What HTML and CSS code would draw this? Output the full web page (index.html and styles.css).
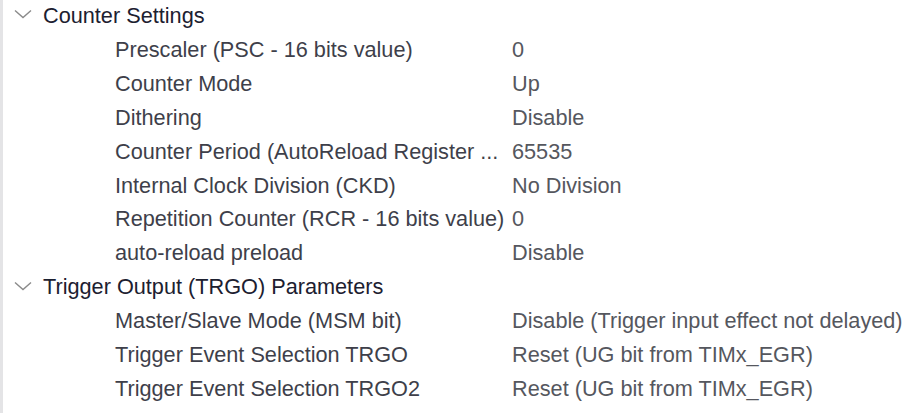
FILE: index.html
```html
<!DOCTYPE html>
<html>
<head>
    <title>TIM Parameter Settings</title>
    <link rel="stylesheet" href="styles.css">
</head>
<body>
    <div class="tree">
        <div class="group">
            <div class="group-head">
                <svg class="chevron" width="18" height="10" viewBox="0 0 18 10"><path d="M1 1.5 L9 8.5 L17 1.5" fill="none" stroke="#8a8a8a" stroke-width="1.4"/></svg>
                <span>Counter Settings</span>
            </div>
            <div class="param"><span class="name">Prescaler (PSC - 16 bits value)</span><span class="value">0</span></div>
            <div class="param"><span class="name">Counter Mode</span><span class="value">Up</span></div>
            <div class="param"><span class="name">Dithering</span><span class="value">Disable</span></div>
            <div class="param"><span class="name">Counter Period (AutoReload Register ...</span><span class="value">65535</span></div>
            <div class="param"><span class="name">Internal Clock Division (CKD)</span><span class="value">No Division</span></div>
            <div class="param"><span class="name">Repetition Counter (RCR - 16 bits value)</span><span class="value">0</span></div>
            <div class="param"><span class="name">auto-reload preload</span><span class="value">Disable</span></div>
        </div>
        <div class="group">
            <div class="group-head">
                <svg class="chevron" width="18" height="10" viewBox="0 0 18 10"><path d="M1 1.5 L9 8.5 L17 1.5" fill="none" stroke="#8a8a8a" stroke-width="1.4"/></svg>
                <span>Trigger Output (TRGO) Parameters</span>
            </div>
            <div class="param"><span class="name">Master/Slave Mode (MSM bit)</span><span class="value">Disable (Trigger input effect not delayed)</span></div>
            <div class="param"><span class="name">Trigger Event Selection TRGO</span><span class="value">Reset (UG bit from TIMx_EGR)</span></div>
            <div class="param"><span class="name">Trigger Event Selection TRGO2</span><span class="value">Reset (UG bit from TIMx_EGR)</span></div>
        </div>
    </div>
</body>
</html>
```

FILE: styles.css
```css
html, body {
    margin: 0;
    background-color: #fff;
    overflow: hidden;
}
.tree {
    font-family: "Liberation Sans", Arial, sans-serif;
    font-size: 21.7px;
    line-height: 33.9px;
    border-left: 3px solid #e4e4e6;
    height: 414px;
    box-sizing: border-box;
}
.group:first-child {
    margin-top: -1px;
}
.group-head {
    display: flex;
    align-items: center;
    padding-left: 11px;
    color: #1c2030;
    white-space: nowrap;
}
.chevron {
    margin-right: 11px;
    margin-top: -3px;
}
.param {
    display: grid;
    grid-template-columns: 397px auto;
    padding-left: 112px;
    white-space: nowrap;
}
.name {
    color: #3e3f4a;
}
.value {
    color: #55575e;
}
```
